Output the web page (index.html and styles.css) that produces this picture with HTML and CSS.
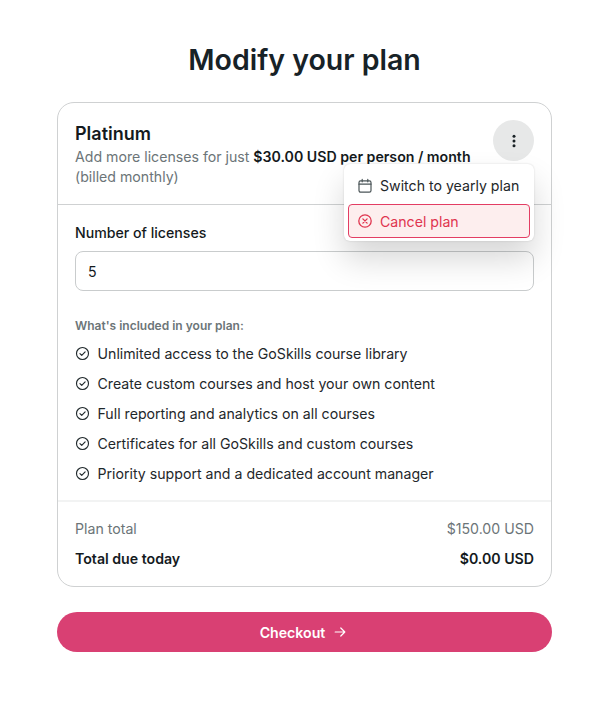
FILE: index.html
```html
<!DOCTYPE html>
<html lang="en">
<head>
<meta charset="UTF-8" />
<meta name="viewport" content="width=device-width, initial-scale=1" />
<title>Modify your plan</title>
<link rel="stylesheet" href="styles.css">
</head>
<body>
  <div class="container">
    <h1>Modify your plan</h1>

    <div class="card">
      <div class="plan-header">
        <h2>Platinum</h2>
        <p>Add more licenses for just <strong>$30.00 USD per person / month</strong> (billed monthly)</p>
        <button class="more-btn" type="button" aria-label="More options">
          <svg width="20" height="20" viewBox="0 0 20 20" fill="#1a2226"><circle cx="10" cy="5.2" r="1.5"/><circle cx="10" cy="10" r="1.5"/><circle cx="10" cy="14.8" r="1.5"/></svg>
        </button>
        <div class="menu">
          <a class="menu-item">
            <svg width="16" height="16" viewBox="0 0 16 16" fill="none" stroke="#4b5558" stroke-width="1.2" stroke-linecap="round" stroke-linejoin="round"><rect x="2" y="2.8" width="12" height="11.4" rx="1.6"/><path d="M2 6.2h12M5.2 1.4v2.4M10.8 1.4v2.4"/></svg>
            Switch to yearly plan
          </a>
          <a class="menu-item danger">
            <svg width="16" height="16" viewBox="0 0 16 16" fill="none" stroke="#e0354f" stroke-width="1.3" stroke-linecap="round"><circle cx="8" cy="8" r="6.2"/><path d="M5.9 5.9l4.2 4.2M10.1 5.9l-4.2 4.2"/></svg>
            Cancel plan
          </a>
        </div>
      </div>

      <div class="plan-body">
        <label for="licenses">Number of licenses</label>
        <input type="text" id="licenses" value="5" />

        <h3>What's included in your plan:</h3>
        <ul class="features">
          <li><svg class="check" viewBox="0 0 16 16"><circle cx="8" cy="8" r="6.4"/><path d="M5.3 8.2l1.9 1.9 3.6-3.8"/></svg>Unlimited access to the GoSkills course library</li>
          <li><svg class="check" viewBox="0 0 16 16"><circle cx="8" cy="8" r="6.4"/><path d="M5.3 8.2l1.9 1.9 3.6-3.8"/></svg>Create custom courses and host your own content</li>
          <li><svg class="check" viewBox="0 0 16 16"><circle cx="8" cy="8" r="6.4"/><path d="M5.3 8.2l1.9 1.9 3.6-3.8"/></svg>Full reporting and analytics on all courses</li>
          <li><svg class="check" viewBox="0 0 16 16"><circle cx="8" cy="8" r="6.4"/><path d="M5.3 8.2l1.9 1.9 3.6-3.8"/></svg>Certificates for all GoSkills and custom courses</li>
          <li><svg class="check" viewBox="0 0 16 16"><circle cx="8" cy="8" r="6.4"/><path d="M5.3 8.2l1.9 1.9 3.6-3.8"/></svg>Priority support and a dedicated account manager</li>
        </ul>
      </div>

      <div class="totals">
        <div class="total-row"><span>Plan total</span><span>$150.00 USD</span></div>
        <div class="total-row due"><span>Total due today</span><span>$0.00 USD</span></div>
      </div>
    </div>

    <button class="checkout" type="button">
      Checkout
      <svg width="14" height="14" viewBox="0 0 14 14" fill="none" stroke="#fff" stroke-width="1.2" stroke-linecap="round" stroke-linejoin="round"><path d="M2.2 7h9.4M7.8 3l4 4-4 4"/></svg>
    </button>
  </div>
</body>
</html>
```

FILE: styles.css
```css
body {
  font-family: Inter, "Liberation Sans", sans-serif;
  background: #fff;
  color: #141a1d;
  margin: 0;
  padding: 42px 0 0 57px;
}
.container {
  width: 495px;
}
h1 {
  margin: 0 0 24px;
  font-size: 28.5px;
  line-height: 36px;
  font-weight: 600;
  text-align: center;
  color: #172227;
}
.card {
  border: 1px solid #cfd1d2;
  border-radius: 17px;
  background: #fff;
}
.plan-header {
  position: relative;
  padding: 19px 17px 17px;
  border-bottom: 1px solid #cfd1d2;
}
.plan-header h2 {
  margin: 0 0 1px;
  font-size: 18px;
  line-height: 24px;
  font-weight: 600;
}
.plan-header p {
  margin: 0;
  width: 410px;
  font-size: 14.15px;
  line-height: 20px;
  color: #6c7578;
}
.plan-header strong {
  font-weight: 600;
  color: #141a1d;
}
.more-btn {
  position: absolute;
  top: 17px;
  right: 17px;
  width: 41px;
  height: 41px;
  display: flex;
  align-items: center;
  justify-content: center;
  padding: 0;
  border: none;
  border-radius: 50%;
  background: #e7e8e8;
}
.menu {
  position: absolute;
  top: 61px;
  right: 17.5px;
  width: 189.5px;
  padding: 4px 4px 3px;
  display: flex;
  flex-direction: column;
  gap: 1px;
  box-sizing: border-box;
  background: #fff;
  border-radius: 6px;
  box-shadow: 0 0 2px rgba(0, 0, 0, .16), 0 18px 32px rgba(0, 0, 0, .16);
  z-index: 2;
}
.menu-item {
  display: flex;
  align-items: center;
  gap: 7px;
  box-sizing: border-box;
  height: 35px;
  padding: 0 9px;
  font-size: 14.15px;
  white-space: nowrap;
  color: #1f282b;
}
.menu-item.danger {
  height: 34px;
  padding: 0 8px;
  color: #e0354f;
  background: #fdeeee;
  border: 1px solid #e33d63;
  border-radius: 4px;
}
.plan-body {
  padding: 19px 17px 12px;
}
label {
  display: block;
  margin-bottom: 9px;
  font-size: 14.15px;
  line-height: 18px;
  font-weight: 500;
}
input[type="text"] {
  display: block;
  width: 100%;
  height: 40px;
  box-sizing: border-box;
  padding: 0 12px;
  border: 1px solid #c9cccd;
  border-radius: 8px;
  font-family: inherit;
  font-size: 14.15px;
  color: #141a1d;
}
h3 {
  margin: 27px 0 4px;
  font-size: 12px;
  line-height: 16px;
  font-weight: 600;
  color: #6c7578;
}
.features {
  list-style: none;
  margin: 0;
  padding: 0;
}
.features li {
  display: flex;
  align-items: center;
  gap: 7.5px;
  height: 30px;
  font-size: 14.15px;
  color: #1f282b;
}
.check {
  width: 15px;
  height: 15px;
  fill: none;
  stroke: #1f282b;
  stroke-width: 1.2;
  stroke-linecap: round;
  stroke-linejoin: round;
}
.totals {
  padding: 11px 17px 13px;
  border-top: 2px solid #f2f3f3;
}
.total-row {
  display: flex;
  justify-content: space-between;
  align-items: center;
  height: 30px;
  font-size: 14.15px;
  color: #6c7578;
}
.total-row.due {
  font-weight: 600;
  color: #141a1d;
}
.checkout {
  display: flex;
  align-items: center;
  justify-content: center;
  gap: 8px;
  width: 100%;
  height: 40px;
  margin-top: 25px;
  padding: 0 2px 0 0;
  border: none;
  border-radius: 20px;
  background: #d94073;
  color: #fff;
  font-family: inherit;
  font-size: 14.15px;
  font-weight: 600;
}
```
